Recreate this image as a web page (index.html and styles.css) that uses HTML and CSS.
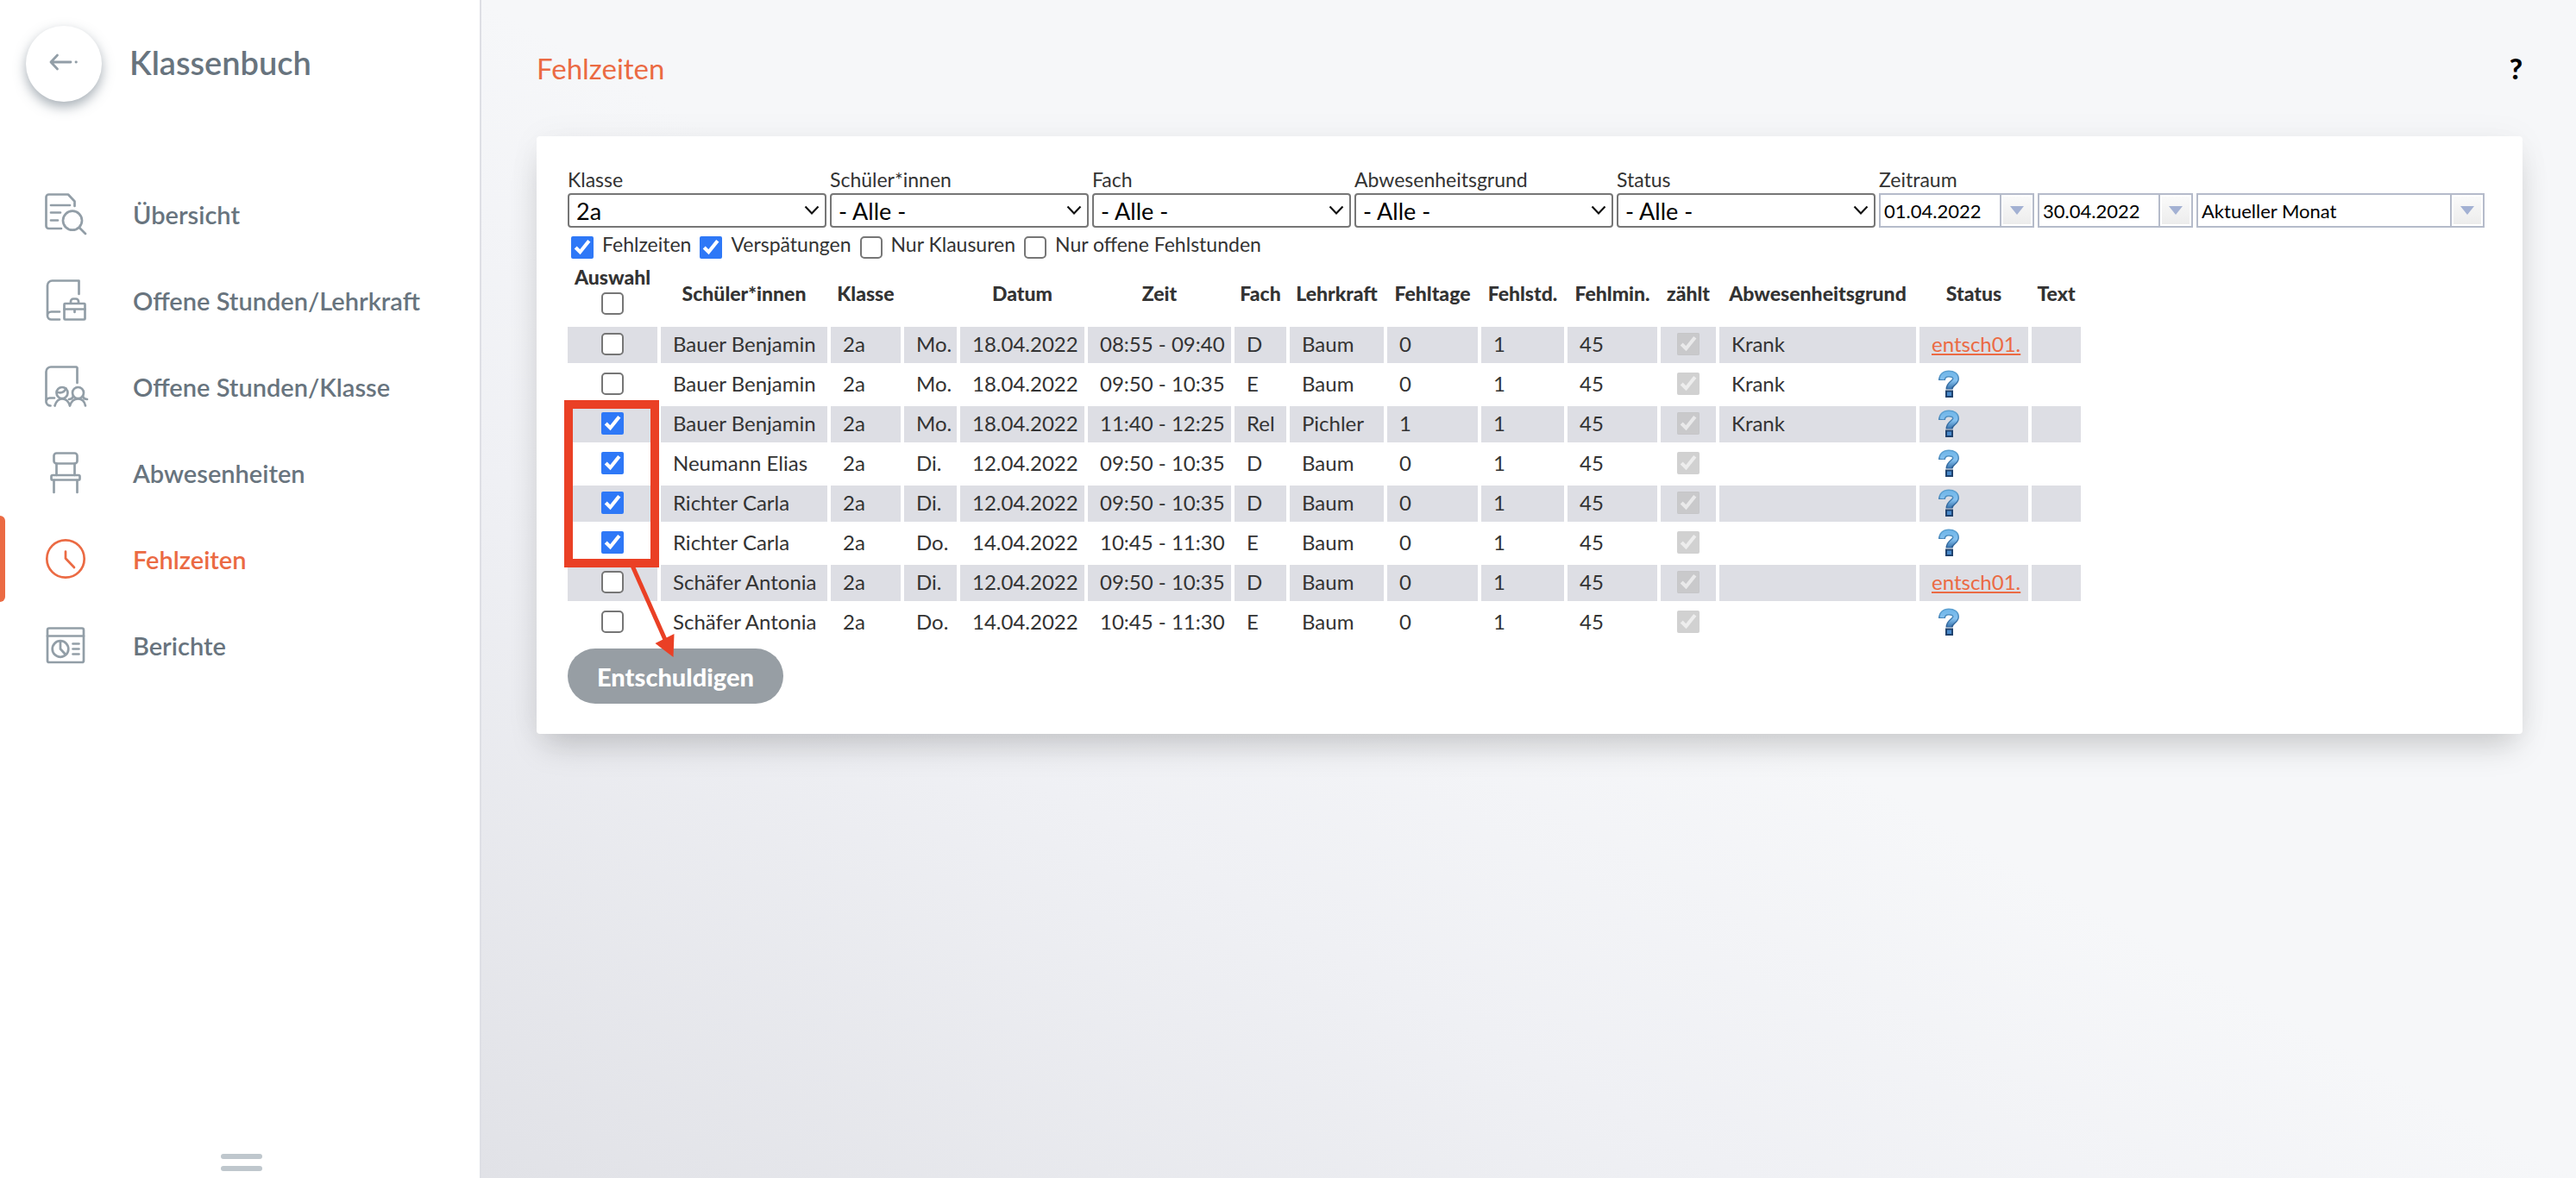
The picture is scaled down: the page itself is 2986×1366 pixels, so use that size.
FILE: index.html
```html
<!DOCTYPE html>
<html lang="de">
<head>
<meta charset="utf-8">
<title>Klassenbuch – Fehlzeiten</title>
<meta name="viewport" content="width=device-width, initial-scale=1">
<link rel="stylesheet" href="styles.css">
</head>
<body>
<svg class="defs" aria-hidden="true">
  <defs>
    <linearGradient id="q-fill" x1="0" y1="0" x2="0" y2="1">
      <stop offset="0" stop-color="#74b8ea"/>
      <stop offset="0.45" stop-color="#86c2f0"/>
      <stop offset="1" stop-color="#3a76b0"/>
    </linearGradient>
    <linearGradient id="q-edge" x1="0" y1="0" x2="0" y2="1">
      <stop offset="0" stop-color="#5a9fd0"/>
      <stop offset="1" stop-color="#2a5a90"/>
    </linearGradient>
    <symbol id="open" viewBox="0 0 24 32">
      <path d="M4 12C4 7 7 4.500 12 4.500c5 0 8 2.200 8 5.800 0 5-7.500 5-7.500 12.200" fill="none" stroke="url(#q-edge)" stroke-width="8"/>
      <path d="M4 11C4.500 7 7 4.500 12 4.500c5 0 8 2.200 8 5.800 0 5-7.500 5-7.500 11.500" fill="none" stroke="url(#q-fill)" stroke-width="5"/>
      <path d="M9 24.500h7V31H9z" fill="#4a8acb" stroke="#1f426e" stroke-width="2"/>
    </symbol>
    <symbol id="chevron" viewBox="0 0 18 12">
      <path d="M1.500 1.500 9 9.500l7.500-8" fill="none" stroke="#111" stroke-width="2.200"/>
    </symbol>
    <symbol id="triangle" viewBox="0 0 16 10"><path d="M0 0h16L8 10z" fill="#a3b1d3"/></symbol>
  </defs>
</svg>
<div class="app">
  <aside class="sidebar">
    <header class="sidebar-head">
      <button class="back" type="button" aria-label="Zurück">
        <svg width="34" height="20" viewBox="0 0 34 20"><path d="M9.500 2 2 10l7.500 8M2 10h23" /><path d="M31 10h.4"/></svg>
      </button>
      <span class="app-name">Klassenbuch</span>
    </header>
    <nav class="menu">
      <a class="menu-item" href="#uebersicht">
        <svg class="menu-icon" viewBox="0 0 56 56"><path d="M23 45H8.500a3 3 0 0 1-3-3V8.500a3 3 0 0 1 3-3H31l7.500 8V19M11 18h22M11 26.500h11M11 35.500h8M44 44l7 7"/><circle cx="36" cy="35.700" r="11"/></svg>
        <span>Übersicht</span>
      </a>
      <a class="menu-item" href="#lehrkraft">
        <svg class="menu-icon" viewBox="0 0 56 56"><path d="M43.500 21V5.500h-31a5.500 5.500 0 0 0-5.500 5.500V46a4.500 4.500 0 0 0 4.500 4.500H21M7 46a4.500 4.500 0 0 1 4.500-4.500H21M26.500 38.500h24M38.500 38.500V42M34 31v-1.500a3 3 0 0 1 3-3h3a3 3 0 0 1 3 3V31"/><rect x="26.500" y="32" width="24" height="18.500" rx="1"/></svg>
        <span>Offene Stunden/Lehrkraft</span>
      </a>
      <a class="menu-item" href="#klasse">
        <svg class="menu-icon" viewBox="0 0 56 56"><path d="M41.500 24V6.500l-1-1H11a5.500 5.500 0 0 0-5.500 5.500V46a5 5 0 0 0 5 4.500M6 44c.5-2 2-2.500 4-2.500h5M15.500 50.500c1.500-5 4.500-8 8.500-8s7.500 3 9 8c1.500-5 5-8 9.500-8s7.500 3 8.500 8M19 35c4.500 1 8-1 9.500-4.500M37 39.500c-1 2.500-2.500 3.500-5 3.500M48 39.500c.5 2 2 3.500 5 3.500"/><circle cx="24" cy="35.500" r="6.500"/><circle cx="42.500" cy="35.500" r="6.500"/></svg>
        <span>Offene Stunden/Klasse</span>
      </a>
      <a class="menu-item" href="#abwesenheiten">
        <svg class="menu-icon" viewBox="0 0 56 56"><rect x="14.500" y="5.500" width="27" height="12" rx="3"/><rect x="11.500" y="31" width="33" height="5.500" rx="1.500"/><path d="M17.500 17.500V31M38.500 17.500V31M14.500 37v14M41.500 37v14"/></svg>
        <span>Abwesenheiten</span>
      </a>
      <a class="menu-item is-active" href="#fehlzeiten" aria-current="page">
        <svg class="menu-icon" viewBox="0 0 56 56"><circle cx="28" cy="28" r="21.700"/><path d="M28 19.500v8l10 10.500"/></svg>
        <span>Fehlzeiten</span>
      </a>
      <a class="menu-item" href="#berichte">
        <svg class="menu-icon" viewBox="0 0 56 56"><rect x="7" y="8.500" width="42" height="39.500" rx="2"/><path d="M7 17.500h42M22 23.500v9l5.500 6M36.500 26.500h7M36.500 32.500h7M36.500 38.500h7"/><circle cx="22" cy="32.500" r="9.300"/></svg>
        <span>Berichte</span>
      </a>
    </nav>
    <button class="grip" type="button" aria-label="Menü einklappen"><span></span><span></span></button>
  </aside>

  <main class="main">
    <header class="page-head">
      <h1>Fehlzeiten</h1>
      <a class="help" href="#hilfe" aria-label="Hilfe">?</a>
    </header>

    <section class="card">
      <form class="filters">
        <div class="field"><label for="f-klasse">Klasse</label>
          <div class="select"><select id="f-klasse"><option>2a</option></select><svg><use href="#chevron"/></svg></div></div>
        <div class="field"><label for="f-schueler">Schüler*innen</label>
          <div class="select"><select id="f-schueler"><option>- Alle -</option></select><svg><use href="#chevron"/></svg></div></div>
        <div class="field"><label for="f-fach">Fach</label>
          <div class="select"><select id="f-fach"><option>- Alle -</option></select><svg><use href="#chevron"/></svg></div></div>
        <div class="field"><label for="f-grund">Abwesenheitsgrund</label>
          <div class="select"><select id="f-grund"><option>- Alle -</option></select><svg><use href="#chevron"/></svg></div></div>
        <div class="field"><label for="f-status">Status</label>
          <div class="select"><select id="f-status"><option>- Alle -</option></select><svg><use href="#chevron"/></svg></div></div>
        <div class="field"><label for="f-von">Zeitraum</label>
          <div class="range">
            <div class="combo"><input id="f-von" type="text" value="01.04.2022"><button type="button" aria-label="Kalender öffnen"><svg><use href="#triangle"/></svg></button></div>
            <div class="combo"><input type="text" value="30.04.2022" aria-label="Bis"><button type="button" aria-label="Kalender öffnen"><svg><use href="#triangle"/></svg></button></div>
            <div class="combo combo-wide"><input type="text" value="Aktueller Monat" aria-label="Vorauswahl"><button type="button" aria-label="Liste öffnen"><svg><use href="#triangle"/></svg></button></div>
          </div></div>
      </form>

      <div class="toggles">
        <label><input type="checkbox" checked><span>Fehlzeiten</span></label>
        <label><input type="checkbox" checked><span>Verspätungen</span></label>
        <label><input type="checkbox"><span>Nur Klausuren</span></label>
        <label><input type="checkbox"><span>Nur offene Fehlstunden</span></label>
      </div>

      <div class="result">
        <table class="absences">
          <colgroup>
            <col class="c-pick"><col class="c-name"><col class="c-class"><col class="c-day"><col class="c-date">
            <col class="c-time"><col class="c-subject"><col class="c-teacher"><col class="c-days"><col class="c-hours">
            <col class="c-minutes"><col class="c-counts"><col class="c-reason"><col class="c-status"><col class="c-text">
          </colgroup>
          <thead>
            <tr>
              <th class="pick-all"><label for="pick-all">Auswahl</label><input id="pick-all" type="checkbox"></th>
              <th>Schüler*innen</th><th>Klasse</th><th></th><th>Datum</th><th>Zeit</th><th>Fach</th><th>Lehrkraft</th>
              <th>Fehltage</th><th>Fehlstd.</th><th>Fehlmin.</th><th>zählt</th><th>Abwesenheitsgrund</th><th>Status</th><th>Text</th>
            </tr>
          </thead>
          <tbody>
            <tr><td class="box"><input type="checkbox" aria-label="Auswählen"></td><td>Bauer Benjamin</td><td>2a</td><td>Mo.</td><td>18.04.2022</td><td>08:55 - 09:40</td><td>D</td><td>Baum</td><td>0</td><td>1</td><td>45</td><td class="box"><input type="checkbox" checked disabled aria-label="zählt"></td><td>Krank</td><td><a class="excuse" href="#entsch01">entsch01.</a></td><td></td></tr>
            <tr><td class="box"><input type="checkbox" aria-label="Auswählen"></td><td>Bauer Benjamin</td><td>2a</td><td>Mo.</td><td>18.04.2022</td><td>09:50 - 10:35</td><td>E</td><td>Baum</td><td>0</td><td>1</td><td>45</td><td class="box"><input type="checkbox" checked disabled aria-label="zählt"></td><td>Krank</td><td><svg class="open" role="img" aria-label="offen"><use href="#open"/></svg></td><td></td></tr>
            <tr><td class="box"><input type="checkbox" checked aria-label="Auswählen"></td><td>Bauer Benjamin</td><td>2a</td><td>Mo.</td><td>18.04.2022</td><td>11:40 - 12:25</td><td>Rel</td><td>Pichler</td><td>1</td><td>1</td><td>45</td><td class="box"><input type="checkbox" checked disabled aria-label="zählt"></td><td>Krank</td><td><svg class="open" role="img" aria-label="offen"><use href="#open"/></svg></td><td></td></tr>
            <tr><td class="box"><input type="checkbox" checked aria-label="Auswählen"></td><td>Neumann Elias</td><td>2a</td><td>Di.</td><td>12.04.2022</td><td>09:50 - 10:35</td><td>D</td><td>Baum</td><td>0</td><td>1</td><td>45</td><td class="box"><input type="checkbox" checked disabled aria-label="zählt"></td><td></td><td><svg class="open" role="img" aria-label="offen"><use href="#open"/></svg></td><td></td></tr>
            <tr><td class="box"><input type="checkbox" checked aria-label="Auswählen"></td><td>Richter Carla</td><td>2a</td><td>Di.</td><td>12.04.2022</td><td>09:50 - 10:35</td><td>D</td><td>Baum</td><td>0</td><td>1</td><td>45</td><td class="box"><input type="checkbox" checked disabled aria-label="zählt"></td><td></td><td><svg class="open" role="img" aria-label="offen"><use href="#open"/></svg></td><td></td></tr>
            <tr><td class="box"><input type="checkbox" checked aria-label="Auswählen"></td><td>Richter Carla</td><td>2a</td><td>Do.</td><td>14.04.2022</td><td>10:45 - 11:30</td><td>E</td><td>Baum</td><td>0</td><td>1</td><td>45</td><td class="box"><input type="checkbox" checked disabled aria-label="zählt"></td><td></td><td><svg class="open" role="img" aria-label="offen"><use href="#open"/></svg></td><td></td></tr>
            <tr><td class="box"><input type="checkbox" aria-label="Auswählen"></td><td>Schäfer Antonia</td><td>2a</td><td>Di.</td><td>12.04.2022</td><td>09:50 - 10:35</td><td>D</td><td>Baum</td><td>0</td><td>1</td><td>45</td><td class="box"><input type="checkbox" checked disabled aria-label="zählt"></td><td></td><td><a class="excuse" href="#entsch01">entsch01.</a></td><td></td></tr>
            <tr><td class="box"><input type="checkbox" aria-label="Auswählen"></td><td>Schäfer Antonia</td><td>2a</td><td>Do.</td><td>14.04.2022</td><td>10:45 - 11:30</td><td>E</td><td>Baum</td><td>0</td><td>1</td><td>45</td><td class="box"><input type="checkbox" checked disabled aria-label="zählt"></td><td></td><td><svg class="open" role="img" aria-label="offen"><use href="#open"/></svg></td><td></td></tr>
          </tbody>
        </table>
        <button class="submit" type="button">Entschuldigen</button>
        <svg class="hint" viewBox="0 0 130 300" aria-hidden="true">
          <rect x="5" y="5" width="100" height="184"/>
          <path class="hint-line" d="M79 192 118 280"/>
          <path class="hint-head" d="M105.500 282 127.500 271 126.500 298z"/>
        </svg>
      </div>
    </section>
  </main>
</div>
</body>
</html>
```

FILE: styles.css
```css
* { box-sizing: border-box; }

:root {
  --accent: #eb6a43;
  --slate: #68747e;
  --icon: #929ea7;
  --text: #333;
  --stripe: #dddee4;
  --mark: #ea4025;
}

body {
  margin: 0;
  font-family: Lato, "Liberation Sans", sans-serif;
  font-size: 24px;
  color: var(--text);
}

button, input, select { font: inherit; }

.defs { position: absolute; width: 0; height: 0; }

.app {
  display: flex;
  min-height: 100vh;
}

/* Sidebar */
.sidebar {
  flex: 0 0 558px;
  display: flex;
  flex-direction: column;
  background: #fff;
  border-right: 2px solid #dedfe5;
}

.sidebar-head {
  display: flex;
  align-items: center;
  gap: 32px;
  padding: 30px 30px 0;
}

.back {
  display: grid;
  place-items: center;
  width: 88px;
  height: 88px;
  padding: 0 0 4px;
  border: 0;
  border-radius: 50%;
  background: #fff;
  box-shadow: 0 6px 14px rgba(80, 95, 110, 0.5);
}

.back svg {
  fill: none;
  stroke: var(--icon);
  stroke-width: 2.8;
  stroke-linecap: round;
  stroke-linejoin: round;
}

.app-name {
  padding-bottom: 4px;
  font-size: 38px;
  font-weight: 600;
  line-height: 48px;
  color: var(--slate);
}

.menu {
  display: flex;
  flex-direction: column;
  padding-top: 80px;
}

.menu-item {
  display: flex;
  align-items: center;
  gap: 50px;
  height: 100px;
  padding-left: 48px;
  font-size: 29px;
  font-weight: 600;
  color: var(--slate);
  text-decoration: none;
}

.menu-item.is-active {
  padding-left: 0;
  gap: 0;
  color: var(--accent);
}

.menu-item.is-active::before {
  content: "";
  width: 6px;
  height: 100px;
  margin-right: 42px;
  border-radius: 0 6px 6px 0;
  background: var(--accent);
}

.is-active span { margin-left: 50px; }

.menu-icon {
  width: 56px;
  height: 56px;
  fill: none;
  stroke: var(--icon);
  stroke-width: 2.7;
  stroke-linecap: round;
  stroke-linejoin: round;
}

.is-active .menu-icon { stroke: var(--accent); }

.grip {
  display: flex;
  flex-direction: column;
  gap: 8px;
  align-self: center;
  margin-top: auto;
  padding: 0 0 8px 4px;
  border: 0;
  background: none;
}

.grip span {
  width: 48px;
  height: 6px;
  border-radius: 3px;
  background: #bfc7cd;
}

/* Content */
.main {
  flex: 1;
  min-width: 0;
  padding: 0 62px 0 64px;
  background: linear-gradient(to top right, #e1e2e7, #eff0f4 30%, #f6f7f9 50%);
}

.page-head {
  display: flex;
  justify-content: space-between;
  align-items: center;
  height: 158px;
}

h1 {
  margin: 0;
  font-size: 33px;
  font-weight: 400;
  color: var(--accent);
}

.help {
  font-size: 33px;
  font-weight: 900;
  color: #000;
  text-decoration: none;
}

.card {
  padding: 36px 36px 35px;
  border-radius: 4px;
  background: #fff;
  box-shadow: 0 20px 36px -8px rgba(0, 0, 0, 0.18), 0 0 40px rgba(0, 0, 0, 0.04);
}

.filters {
  display: flex;
  gap: 4px;
}

.field { font-size: 23px; }

.field > label {
  display: block;
  height: 30px;
  line-height: 28px;
}

.select {
  display: grid;
  align-items: center;
  width: 300px;
}

.select select {
  grid-area: 1 / 1;
  width: 100%;
  height: 40px;
  padding: 0 8px;
  appearance: none;
  border: 2px solid #767676;
  border-radius: 4px;
  background: #fff;
  font-size: 27px;
  color: #000;
}

.select svg {
  grid-area: 1 / 1;
  justify-self: end;
  width: 18px;
  height: 12px;
  margin-right: 8px;
  pointer-events: none;
}

.range {
  display: flex;
  gap: 4px;
}

.combo {
  display: flex;
  width: 180px;
  height: 40px;
  border: 2px solid #b5bbca;
  background: #fff;
}

.combo-wide { width: 334px; }

.combo input {
  flex: 1;
  min-width: 0;
  padding: 0 4px;
  border: 0;
  border-right: 2px solid #b5bbca;
  background: none;
  font-size: 22px;
  color: #000;
}

.combo button {
  display: grid;
  place-items: center;
  width: 36px;
  padding: 0;
  border: 2px solid #fff;
  background: linear-gradient(#fafafa, #ececec);
}

.combo button svg {
  width: 16px;
  height: 10px;
}

input[type="checkbox"] {
  width: 26px;
  height: 26px;
  margin: 0;
  accent-color: #2e78f7;
}

input[type="checkbox"]:not(:checked) {
  appearance: none;
  border: 2px solid #767676;
  border-radius: 5px;
  background: #fff;
}

.toggles {
  display: flex;
  gap: 10px;
  padding: 10px 4px 0;
}

.toggles label {
  display: flex;
  gap: 10px;
  line-height: 18px;
  font-size: 23px;
}

/* Result table */
.result {
  position: relative;
  padding-top: 4px;
}

.absences {
  width: 1762px;
  margin-left: -4px;
  table-layout: fixed;
  border-spacing: 4px;
}

.c-pick { width: 104px; }
.c-name { width: 193px; }
.c-class { width: 81px; }
.c-day { width: 61px; }
.c-date { width: 144px; }
.c-time { width: 166px; }
.c-subject { width: 60px; }
.c-teacher { width: 109px; }
.c-days { width: 105px; }
.c-hours { width: 96px; }
.c-minutes { width: 104px; }
.c-counts { width: 64px; }
.c-reason { width: 228px; }
.c-status { width: 126px; }
.c-text { width: 57px; }

.absences th {
  height: 67px;
  padding: 0 0 4px;
  font-size: 23px;
  font-weight: 900;
  line-height: 26px;
  white-space: nowrap;
}

.absences .pick-all { vertical-align: top; }

.pick-all label {
  display: block;
  margin-bottom: 5px;
}

.pick-all input { display: block; margin: 0 auto; }

.absences td {
  height: 42px;
  padding: 0 0 2px 14px;
  line-height: 30px;
  white-space: nowrap;
}

.absences .box { padding: 0 0 2px; }
.box input { display: block; margin: 0 auto; }

.absences tbody tr:nth-child(odd) td { background: var(--stripe); }

.excuse { color: var(--accent); }

.open {
  display: block;
  width: 24px;
  height: 32px;
  margin-left: 8px;
}

.submit {
  display: block;
  height: 64px;
  margin-top: 5px;
  padding: 0 34px;
  border: 0;
  border-radius: 32px;
  background: #979ea4;
  font-size: 29px;
  font-weight: 900;
  color: #fff;
}

/* Annotation over the selected rows */
.hint {
  position: absolute;
  top: 164px;
  left: -4px;
  width: 130px;
  height: 300px;
  pointer-events: none;
}

.hint rect,
.hint-line {
  fill: none;
  stroke: var(--mark);
  stroke-width: 10;
}

.hint .hint-line { stroke-width: 5; }
.hint-head { fill: var(--mark); }
```
